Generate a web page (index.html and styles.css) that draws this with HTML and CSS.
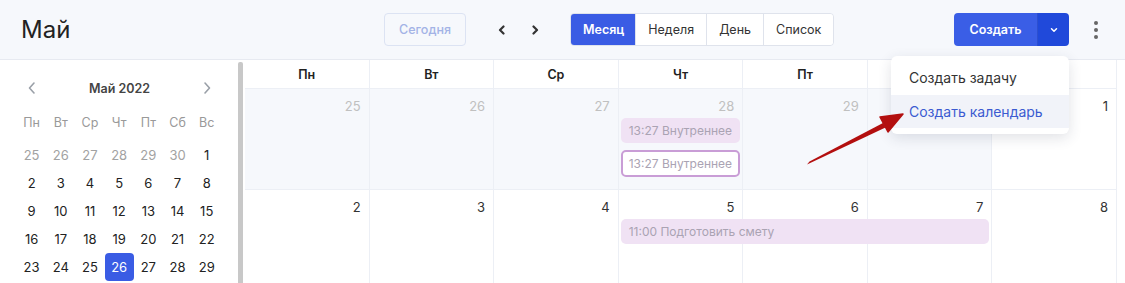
FILE: index.html
```html
<!DOCTYPE html>
<html lang="ru">
<head>
  <meta charset="UTF-8" />
  <title>Календарь</title>
  <link rel="stylesheet" href="styles.css">
</head>
<body>

  <!-- Верхняя панель -->
  <div class="topbar">
    <div class="title">Май</div>
    <button class="btn-today">Сегодня</button>
    <div class="nav">
      <button class="nav-btn"><svg width="10" height="10" viewBox="0 0 10 10"><path d="M6.5 1.5 L3 5 L6.5 8.5" fill="none" stroke="#333" stroke-width="2.2" stroke-linecap="round" stroke-linejoin="round"/></svg></button>
      <button class="nav-btn"><svg width="10" height="10" viewBox="0 0 10 10"><path d="M3.5 1.5 L7 5 L3.5 8.5" fill="none" stroke="#333" stroke-width="2.2" stroke-linecap="round" stroke-linejoin="round"/></svg></button>
    </div>
    <div class="views">
      <button class="view active">Месяц</button>
      <button class="view">Неделя</button>
      <button class="view">День</button>
      <button class="view">Список</button>
    </div>
    <div class="right">
      <div class="create">
        <button class="create-main">Создать</button>
        <button class="create-drop"><svg width="10" height="10" viewBox="0 0 10 10"><path d="M2.5 3.8 L5 6.2 L7.5 3.8" fill="none" stroke="#fff" stroke-width="1.5" stroke-linecap="round" stroke-linejoin="round"/></svg></button>
      </div>
      <button class="more"><span></span><span></span><span></span></button>
    </div>
  </div>

  <div class="main">
    <!-- Мини-календарь -->
    <div class="sidebar">
      <div class="mini-head">
        <svg width="12" height="14" viewBox="0 0 12 14"><path d="M8 2 L3.5 7 L8 12" fill="none" stroke="#9aa0a8" stroke-width="1.6" stroke-linecap="round" stroke-linejoin="round"/></svg>
        <span>Май 2022</span>
        <svg width="12" height="14" viewBox="0 0 12 14"><path d="M4 2 L8.5 7 L4 12" fill="none" stroke="#9aa0a8" stroke-width="1.6" stroke-linecap="round" stroke-linejoin="round"/></svg>
      </div>
      <div class="mini-grid">
        <div class="wd">Пн</div><div class="wd">Вт</div><div class="wd">Ср</div><div class="wd">Чт</div><div class="wd">Пт</div><div class="wd">Сб</div><div class="wd">Вс</div>
        <div class="md other">25</div><div class="md other">26</div><div class="md other">27</div><div class="md other">28</div><div class="md other">29</div><div class="md other">30</div><div class="md">1</div>
        <div class="md">2</div><div class="md">3</div><div class="md">4</div><div class="md">5</div><div class="md">6</div><div class="md">7</div><div class="md">8</div>
        <div class="md">9</div><div class="md">10</div><div class="md">11</div><div class="md">12</div><div class="md">13</div><div class="md">14</div><div class="md">15</div>
        <div class="md">16</div><div class="md">17</div><div class="md">18</div><div class="md">19</div><div class="md">20</div><div class="md">21</div><div class="md">22</div>
        <div class="md">23</div><div class="md">24</div><div class="md">25</div><div class="md selected">26</div><div class="md">27</div><div class="md">28</div><div class="md">29</div>
      </div>
    </div>
    <div class="scrollbar"></div>

    <!-- Месяц -->
    <div class="month">
      <div class="dow-row">
        <div class="dow">Пн</div><div class="dow">Вт</div><div class="dow">Ср</div><div class="dow">Чт</div><div class="dow">Пт</div><div class="dow">Сб</div><div class="dow">Вс</div>
      </div>

      <div class="week">
        <div class="day other" style="grid-column: 1">25</div>
        <div class="day other" style="grid-column: 2">26</div>
        <div class="day other" style="grid-column: 3">27</div>
        <div class="day other" style="grid-column: 4">28</div>
        <div class="day other" style="grid-column: 5">29</div>
        <div class="day other" style="grid-column: 6">30</div>
        <div class="day" style="grid-column: 7">1</div>
        <div class="event" style="grid-column: 4; grid-row: 2">13:27 Внутреннее</div>
        <div class="event outline" style="grid-column: 4; grid-row: 3">13:27 Внутреннее</div>
      </div>

      <div class="week">
        <div class="day" style="grid-column: 1">2</div>
        <div class="day" style="grid-column: 2">3</div>
        <div class="day" style="grid-column: 3">4</div>
        <div class="day" style="grid-column: 4">5</div>
        <div class="day" style="grid-column: 5">6</div>
        <div class="day" style="grid-column: 6">7</div>
        <div class="day" style="grid-column: 7">8</div>
        <div class="event" style="grid-column: 4 / span 3; grid-row: 2">11:00 Подготовить смету</div>
      </div>
    </div>
  </div>

  <!-- Меню "Создать" -->
  <div class="menu">
    <div class="menu-item first">Создать задачу</div>
    <div class="menu-item hover">Создать календарь</div>
  </div>

  <!-- Стрелка-указатель -->
  <svg class="pointer" width="1125" height="283" viewBox="0 0 1125 283">
    <polygon points="807,164.5 809.5,161.5 883,123 885.5,127.5" fill="#b30f0f"/>
    <polygon points="903,114 880,117 888,132" fill="#b30f0f" stroke="#b30f0f" stroke-width="1.5" stroke-linejoin="round"/>
  </svg>

</body>
</html>
```

FILE: styles.css
```css
body {
  margin: 0;
  font-family: Inter, "Noto Sans", sans-serif;
  color: #222;
  background: #fff;
  width: 1125px;
  height: 283px;
  overflow: hidden;
  position: relative;
}

button {
  font-family: inherit;
  cursor: pointer;
}

/* Верхняя панель */
.topbar {
  display: flex;
  align-items: center;
  height: 59px;
  background-color: #f6f8fc;
  border-bottom: 1px solid #e7eaf1;
  padding-left: 21px;
}

.title {
  width: 363px;
  font-size: 24px;
  color: #222;
}

.btn-today {
  width: 82px;
  height: 33px;
  background: transparent;
  border: 1px solid #dce3f3;
  border-radius: 4px;
  color: #a3b3e6;
  font-size: 12.5px;
  font-weight: 500;
}

.nav {
  display: flex;
  gap: 9px;
  margin-left: 24px;
}

.nav-btn {
  width: 24px;
  height: 24px;
  border: none;
  background: transparent;
  display: flex;
  align-items: center;
  justify-content: center;
  padding: 0;
}

.views {
  display: flex;
  margin-left: 23px;
  height: 33px;
  border: 1px solid #dfe3ec;
  border-radius: 4px;
  overflow: hidden;
  box-sizing: border-box;
}

.view {
  border: none;
  border-left: 1px solid #dfe3ec;
  background: #fff;
  color: #333;
  font-size: 12.5px;
  padding: 0 12px;
}

.view:first-child {
  border-left: none;
}

.view.active {
  background-color: #3a5ce4;
  color: #fff;
  font-weight: 600;
  padding: 0 11px 0 12px;
}

.right {
  display: flex;
  align-items: center;
  margin-left: auto;
  margin-right: 19px;
  gap: 17px;
}

.create {
  display: flex;
  height: 33px;
  border-radius: 4px;
  overflow: hidden;
}

.create-main {
  width: 83px;
  border: none;
  background-color: #3a5ee6;
  color: #fff;
  font-size: 12.5px;
  font-weight: 600;
}

.create-drop {
  width: 32px;
  border: none;
  border-left: 1px solid #2c4fd0;
  background-color: #2049da;
  display: flex;
  align-items: center;
  justify-content: center;
  padding: 0;
}

.more {
  width: 20px;
  height: 24px;
  border: none;
  background: transparent;
  display: flex;
  flex-direction: column;
  align-items: center;
  justify-content: center;
  gap: 3px;
  padding: 0;
}

.more span {
  width: 4px;
  height: 4px;
  border-radius: 50%;
  background: #666;
}

/* Основная часть */
.main {
  display: flex;
}

.sidebar {
  width: 238px;
  padding-top: 16px;
}

.mini-head {
  display: flex;
  align-items: center;
  justify-content: space-between;
  height: 24px;
  padding: 0 25px 0 26px;
  font-size: 12.5px;
  font-weight: 600;
  color: #444;
}

.mini-grid {
  display: grid;
  grid-template-columns: repeat(7, 29.2px);
  grid-template-rows: 33px;
  grid-auto-rows: 28px;
  margin: 8px 0 0 17px;
}

.mini-grid .wd {
  display: flex;
  align-items: center;
  justify-content: center;
  height: 28px;
  font-size: 12.5px;
  color: #999;
}

.md {
  display: flex;
  align-items: center;
  justify-content: center;
  font-size: 13px;
  color: #222;
  border-radius: 4px;
}

.md.other {
  color: #a2a2a2;
}

.md.selected {
  background-color: #3a5ce4;
  color: #fff;
}

.scrollbar {
  width: 5px;
  margin-top: 2px;
  height: 230px;
  background: #c8c8c8;
  border-radius: 2px 2px 0 0;
  margin-right: 2px;
}

/* Месяц */
.month {
  width: 872px;
}

.dow-row {
  display: grid;
  grid-template-columns: repeat(7, 1fr);
  height: 28px;
  border-bottom: 1px solid #eceff5;
}

.dow {
  display: flex;
  align-items: center;
  justify-content: center;
  font-size: 12.5px;
  font-weight: 600;
  color: #222;
  border-right: 1px solid #eceff5;
}

.week {
  display: grid;
  grid-template-columns: repeat(7, 1fr);
  grid-template-rows: 28px auto auto 1fr;
  height: 100px;
  border-bottom: 1px solid #eceff5;
}

.day {
  grid-row: 1 / -1;
  text-align: right;
  padding: 9px 8px 0 0;
  font-size: 13px;
  color: #333;
  background: #fff;
  border-right: 1px solid #eceff5;
}

.day.other {
  color: #c0c0c0;
  background-color: #f6f8fc;
}

.event {
  z-index: 1;
  height: 25px;
  margin: 1px 3px 0 2px;
  padding: 0 8px;
  display: flex;
  align-items: center;
  font-size: 12px;
  color: #aaa3b3;
  background-color: #f0e2f4;
  border-radius: 5px;
  white-space: nowrap;
  overflow: hidden;
}

.event.outline {
  height: 23px;
  margin-top: 7px;
  background-color: #fff;
  border: 2px solid #c99dd6;
  padding: 0 6px;
}

/* Меню */
.menu {
  position: absolute;
  left: 891px;
  top: 56px;
  width: 178px;
  padding: 6px 0;
  background: #fff;
  border-radius: 6px;
  box-shadow: 0 4px 14px rgba(40, 50, 80, 0.14);
  z-index: 5;
}

.menu-item {
  height: 33px;
  display: flex;
  align-items: center;
  padding-left: 18px;
  font-size: 14px;
  color: #333;
}

.menu-item.first {
  padding-bottom: 3px;
  height: 30px;
}

.menu-item.hover {
  background-color: #f1f3f9;
  color: #3b5bd1;
}

.pointer {
  position: absolute;
  left: 0;
  top: 0;
  z-index: 6;
  pointer-events: none;
}
```
